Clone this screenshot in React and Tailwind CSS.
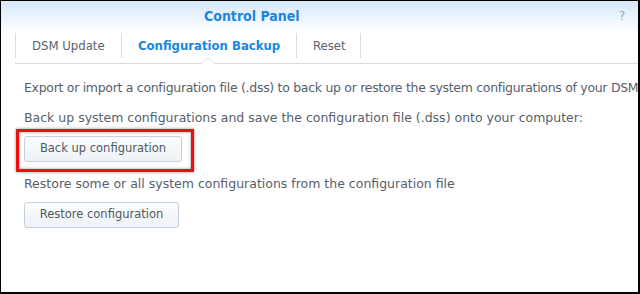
export default function App() {
  return (
    <div className="w-[640px] h-[294px] bg-white border-black border-l border-t border-r-2 border-b-2 overflow-hidden font-['DejaVu_Sans',sans-serif] text-[12.5px] text-[#56606a]">
      <div className="relative h-[32px] bg-gradient-to-b from-[#d6e8fa] to-white">
        <div className="absolute left-[203px] top-[7px] font-['DejaVu_Sans_Condensed','DejaVu_Sans',sans-serif] font-bold text-[14px] text-[#1a86e0] leading-[17px]">Control Panel</div>
        <div className="absolute left-[618px] top-[8px] font-['DejaVu_Sans_Condensed',sans-serif] text-[#9aa3ab] text-[13px] leading-[14px]">?</div>
      </div>
      <div className="relative ml-[14px] flex h-[31px] border-b border-[#d4dbe2] font-['DejaVu_Sans_Condensed','DejaVu_Sans',sans-serif]">
        <div className="flex h-[25px] w-[106px] items-center border-l border-[#d3dde7] pl-[16px] text-[13px] text-[#59626b]">DSM Update</div>
        <div className="flex h-[25px] w-[175px] items-center border-l border-[#d3dde7] pl-[16px] text-[13px] font-bold text-[#1a86e0]">Configuration Backup</div>
        <div className="flex h-[25px] w-[65px] items-center border-l border-r border-[#d3dde7] pl-[16px] text-[13px] text-[#59626b]">Reset</div>
        <svg className="absolute left-[186px] top-[24px]" width="14" height="8" viewBox="0 0 14 8">
          <path d="M0 7 L7 0.5 L14 7 Z" fill="#ffffff" />
          <path d="M0 7 L7 0.5 L14 7" fill="none" stroke="#d4dbe2" strokeWidth="1" />
        </svg>
      </div>
      <div className="pl-[23px] pt-[16px]">
        <div className="leading-[16px] whitespace-nowrap tracking-[-0.3px]">Export or import a configuration file (.dss) to back up or restore the system configurations of your DSM</div>
        <div className="mt-[14px] leading-[16px] whitespace-nowrap">Back up system configurations and save the configuration file (.dss) onto your computer:</div>
        <div className="relative mt-[10px] w-[158px]">
          <div className="flex h-[26px] w-[158px] items-center justify-center rounded-[3px] border border-[#c6d0da] bg-gradient-to-b from-[#fbfcfe] to-[#eef2f6] text-[11.5px] text-[#505a64]">Back up configuration</div>
          <div className="absolute -left-[8px] -top-[7px] h-[43px] w-[178px] border-[3px] border-[#f10d0d] shadow-[0_0_3px_rgba(0,0,0,0.45),inset_0_0_3px_rgba(0,0,0,0.45)]"></div>
        </div>
        <div className="mt-[14px] leading-[16px] whitespace-nowrap">Restore some or all system configurations from the configuration file</div>
        <div className="mt-[10px] flex h-[26px] w-[155px] items-center justify-center rounded-[3px] border border-[#c6d0da] bg-gradient-to-b from-[#fbfcfe] to-[#eef2f6] text-[11.5px] text-[#505a64]">Restore configuration</div>
      </div>
    </div>
  );
}
